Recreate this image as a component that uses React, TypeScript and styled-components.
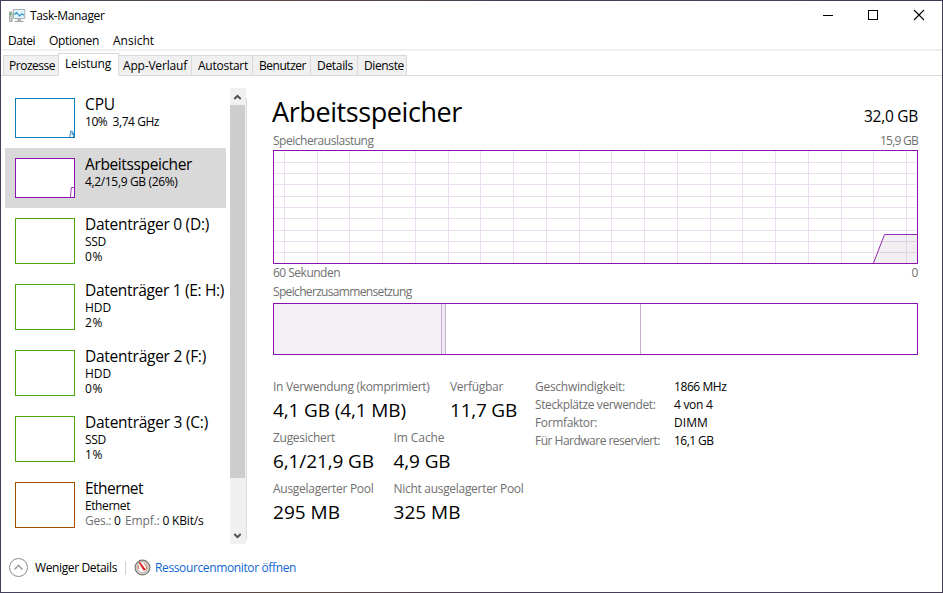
import React, { useLayoutEffect, useRef } from 'react';
import styled, { createGlobalStyle } from 'styled-components';

const GlobalStyle = createGlobalStyle`
  * { box-sizing: border-box; }
  html, body { margin: 0; padding: 0; overflow: hidden; }
  body { font-family: "Open Sans", "Noto Sans", sans-serif; font-size: 12px; line-height: 15px; color: #000; }
`;

const Label = styled.span<{ $width: number; $muted?: boolean }>`
  display: block;
  flex: none;
  width: ${p => p.$width}px;
  white-space: pre;
  color: ${p => (p.$muted ? '#707070' : 'inherit')};
`;

/* Tracks its letters so that the text fills the given width. */
function Fit({ w, muted, children }: { w: number; muted?: boolean; children: string }) {
  const ref = useRef<HTMLSpanElement>(null);
  useLayoutEffect(() => {
    const el = ref.current;
    if (!el) return;
    el.style.letterSpacing = '0px';
    const range = document.createRange();
    range.selectNodeContents(el);
    const natural = range.getBoundingClientRect().width;
    el.style.letterSpacing = `${(w - natural) / children.length}px`;
  }, [w, children]);
  return <Label ref={ref} $width={w} $muted={muted}>{children}</Label>;
}

const Desktop = styled.div`
  width: 943px;
  height: 593px;
  padding: 1px;
  background: linear-gradient(90deg, #44405c, #5d4943 30%, #453b55 55%, #46405e 80%, #403850);
`;

const Window = styled.div`
  display: flex;
  flex-direction: column;
  width: 941px;
  height: 591px;
  background: #fff;
`;

const TitleBar = styled.header`
  display: flex;
  height: 29px;
  padding: 7px 0 0 8px;
`;

const TitleText = styled.div`
  margin-left: 4px;
  flex: 1;
`;

const Controls = styled.div`
  display: flex;
  gap: 30px;
  padding-right: 15px;
`;

const MenuBar = styled.nav`
  display: flex;
  gap: 14px;
  height: 21px;
  padding: 3px 0 0 7px;
  border-bottom: 2px solid #f0f0f0;
`;

const TabBar = styled.div`
  display: flex;
  align-items: flex-end;
  height: 25px;
  padding-left: 2px;
  box-shadow: inset 0 -1px #d9d9d9;
`;

const Tab = styled.div<{ $w: number; $pad: number; $active?: boolean; $first?: boolean }>`
  width: ${p => p.$w}px;
  height: ${p => (p.$active ? 23 : 21)}px;
  padding: 2px 0 0 ${p => p.$pad}px;
  background: ${p => (p.$active ? '#fff' : '#f0f0f0')};
  border: 1px solid #d9d9d9;
  border-left-width: ${p => (p.$active || p.$first ? 1 : 0)}px;
  border-right-width: ${p => (p.$first ? 0 : 1)}px;
  border-bottom-color: ${p => (p.$active ? '#fff' : '#d9d9d9')};
`;

const Body = styled.div`
  display: flex;
  height: 468px;
  padding-top: 12px;
`;

const Sidebar = styled.div`
  width: 225px;
  padding: 0 0 0 4px;
`;

const Item = styled.div<{ $tall?: boolean; $selected?: boolean }>`
  display: flex;
  gap: 10px;
  width: 221px;
  height: ${p => (p.$tall ? 66 : 60)}px;
  padding: 10px 0 0 10px;
  background: ${p => (p.$selected ? '#d9d9d9' : 'transparent')};
`;

const Thumb = styled.div<{ $color: string; $tall?: boolean }>`
  flex: none;
  width: 60px;
  height: ${p => (p.$tall ? 46 : 40)}px;
  background: #fff;
  border: 1px solid ${p => p.$color};
  display: flex;
  align-items: flex-end;
  justify-content: flex-end;
`;

const ItemText = styled.div`
  margin-top: -4px;
`;

const ItemTitle = styled.div`
  font-size: 15.5px;
  line-height: 20px;
`;

const Line = styled.div`
  display: flex;
`;

const Scrollbar = styled.div`
  display: flex;
  flex-direction: column;
  align-items: center;
  justify-content: space-between;
  width: 16px;
  height: 456px;
  margin-left: 4px;
  background: #f0f0f0;
`;

const ScrollHandle = styled.div`
  width: 15px;
  height: 373px;
  margin-right: 1px;
  margin-bottom: 49px;
  background: #cdcdcd;
`;

const ScrollArrow = styled.svg`
  flex: none;
  width: 16px;
  height: 17px;
`;

const Splitter = styled.div`
  width: 1px;
  height: 442px;
  margin-top: 10px;
  background: #dcdcdc;
`;

const Main = styled.main`
  width: 646px;
  margin-left: 25px;
  padding: 5px 0 0 1px;
`;

const Heading = styled.div`
  display: flex;
  justify-content: space-between;
  height: 40px;
  margin-left: -1px;
`;

const HeadingTitle = styled.div`
  font-size: 27px;
  line-height: 37px;
`;

const HeadingTotal = styled.div`
  padding-top: 12px;
  font-size: 15.5px;
  line-height: 22px;
`;

const Caption = styled.div`
  display: flex;
  justify-content: space-between;
  height: 17px;
  width: 645px;
`;

const ChartSvg = styled.svg`
  display: block;
  width: 645px;
  height: 114px;
`;

const AxisLabels = styled(Caption)`
  height: 20px;
  padding-top: 1px;
`;

const CompositionCaption = styled(Caption)`
  height: 19px;
`;

const Composition = styled.div`
  display: flex;
  width: 645px;
  height: 52px;
  border: 1px solid #8b12ae;
`;

const Segment = styled.div<{ $w: number; $fill?: string }>`
  flex: none;
  width: ${p => p.$w}px;
  background: ${p => p.$fill ?? '#fff'};
  border-right: 1px solid #ccacd4;
`;

const Stats = styled.div`
  display: flex;
  padding-top: 24px;
`;

const StatRows = styled.div`
  width: 262px;
`;

const StatRow = styled.div`
  display: flex;
  height: 51px;
`;

const Stat = styled.div<{ $w: number }>`
  flex: none;
  width: ${p => p.$w}px;
`;

const StatValue = styled.div`
  margin-top: 3px;
  font-size: 19px;
  line-height: 26px;
`;

const Details = styled.div`
  display: grid;
  grid-template-columns: 139px auto;
  grid-auto-rows: 18px;
  align-content: start;
`;

const Footer = styled.footer`
  display: flex;
  align-items: center;
  height: 47px;
  padding: 0 0 0 7px;
`;

const FooterText = styled.div`
  margin: 0 0 0 6px;
`;

const FooterRule = styled.div`
  width: 1px;
  height: 14px;
  margin: 0 8px 0 8px;
  background: #d0d0d0;
`;

const LinkText = styled.div`
  margin: 0 0 0 4px;
  color: #0f68d2;
`;

const tabs: [string, number, number, number][] = [
  ['Prozesse', 55, 46, 5],
  ['Leistung', 61, 46, 6],
  ['App-Verlauf', 73, 64, 4],
  ['Autostart', 61, 50, 6],
  ['Benutzer', 58, 47, 6],
  ['Details', 47, 36, 6],
  ['Dienste', 49, 40, 6],
];

const disks: [string, number, string, number, string][] = [
  ['Datenträger 0 (D:)', 124, 'SSD', 21, '0%'],
  ['Datenträger 1 (E: H:)', 139, 'HDD', 26, '2%'],
  ['Datenträger 2 (F:)', 121, 'HDD', 26, '0%'],
  ['Datenträger 3 (C:)', 123, 'SSD', 21, '1%'],
];

const stats: [string, number, string, number, number][][] = [
  [['In Verwendung (komprimiert)', 156.5, '4,1 GB (4,1 MB)', 133, 177], ['Verfügbar', 53, '11,7 GB', 67, 80]],
  [['Zugesichert', 62, '6,1/21,9 GB', 101, 120.5], ['Im Cache', 51, '4,9 GB', 57, 130]],
  [['Ausgelagerter Pool', 100.5, '295 MB', 67, 120.5], ['Nicht ausgelagerter Pool', 130, '325 MB', 67, 135]],
];

const details: [string, number, string, number][] = [
  ['Geschwindigkeit:', 90, '1866 MHz', 52.5],
  ['Steckplätze verwendet:', 120.5, '4 von 4', 38.5],
  ['Formfaktor:', 62, 'DIMM', 34],
  ['Für Hardware reserviert:', 125, '16,1 GB', 39.5],
];

const gridX = Array.from({ length: 20 }, (_, k) => Math.floor(11.4 + 32.75 * k));
const gridY = [12, 23, 34, 46, 57, 68, 80, 91, 102];

function AppIcon() {
  return (
    <svg width="17" height="16" viewBox="0 0 17 16">
      <path d="M.4 3.9h2.7v9.7H.4z" fill="#c9c9c9" stroke="#9b9b9b" strokeWidth=".8" />
      <path d="M.8 5.2h1.6v1.6H.8z" fill="#35b44a" />
      <path d="M4.5 1.5h11.3v9H4.5z" fill="#dff3fb" stroke="#a9b0b4" />
      <path d="M5.3 6.5l2.2-2 3.2 3.4 2-2.2 2.4 1.5" fill="none" stroke="#2793c8" strokeWidth="1.1" />
      <path d="M8.5 11h3.4v1.5H8.5zM5.8 12.8h8.8V14H5.8z" fill="#a3a7a9" />
    </svg>
  );
}

function GaugeIcon() {
  return (
    <svg width="17" height="17" viewBox="0 0 17 17">
      <circle cx="8.5" cy="8.5" r="7.4" fill="#dedbd6" stroke="#77736e" strokeWidth="1.1" />
      <circle cx="8.5" cy="8.2" r="5.4" fill="#fff" stroke="#a39d96" strokeWidth=".8" />
      <path d="M4.7 10a4.2 4.2 0 0 1 0-3.5M12 10.5a4.2 4.2 0 0 0-2-5.9" fill="none" stroke="#df7951" strokeWidth="1.1" />
      <path d="M5 3.6L5.9 3.2 11.3 10.6 9.9 11.5z" fill="#d51218" stroke="#d51218" strokeWidth=".6" />
    </svg>
  );
}

export default function App() {
  return (
    <>
      <GlobalStyle />
      <Desktop>
        <Window>
          <TitleBar>
            <AppIcon />
            <TitleText><Fit w={74.5}>Task-Manager</Fit></TitleText>
            <Controls>
              <svg width="15" height="15"><path d="M2 7.5h10" stroke="#000" shapeRendering="crispEdges" /></svg>
              <svg width="16" height="15"><path d="M2.5 2.5h9v9h-9z" fill="none" stroke="#000" shapeRendering="crispEdges" /></svg>
              <svg width="15" height="15"><path d="M2 2l10 10M12 2L2 12" stroke="#000" strokeWidth="1.1" /></svg>
            </Controls>
          </TitleBar>
          <MenuBar>
            <Fit w={27}>Datei</Fit>
            <Fit w={50}>Optionen</Fit>
            <Fit w={41}>Ansicht</Fit>
          </MenuBar>
          <TabBar>
            {tabs.map(([name, w, tw, pad], i) => (
              <Tab key={name} $w={w} $pad={pad} $active={i === 1} $first={i === 0}><Fit w={tw}>{name}</Fit></Tab>
            ))}
          </TabBar>
          <Body>
            <Sidebar>
              <Item>
                <Thumb $color="#117dbb">
                  <svg width="5" height="7"><path d="M.8 7L1.8 1h1.4v4L4.6 2.5V7" fill="none" stroke="#3a92c6" /></svg>
                </Thumb>
                <ItemText>
                  <ItemTitle><Fit w={30}>CPU</Fit></ItemTitle>
                  <Fit w={74}>10%  3,74 GHz</Fit>
                </ItemText>
              </Item>
              <Item $selected>
                <Thumb $color="#8b12ae">
                  <svg width="4" height="10"><path d="M.5 10L1.3.5H4" fill="none" stroke="#a03cbe" /></svg>
                </Thumb>
                <ItemText>
                  <ItemTitle><Fit w={107}>Arbeitsspeicher</Fit></ItemTitle>
                  <Fit w={92.5}>4,2/15,9 GB (26%)</Fit>
                </ItemText>
              </Item>
              {disks.map(([name, w, kind, kw, load]) => (
                <Item $tall key={name}>
                  <Thumb $tall $color="#4da60c" />
                  <ItemText>
                    <ItemTitle><Fit w={w}>{name}</Fit></ItemTitle>
                    <Fit w={kw}>{kind}</Fit>
                    <Fit w={18}>{load}</Fit>
                  </ItemText>
                </Item>
              ))}
              <Item $tall>
                <Thumb $tall $color="#a74f01" />
                <ItemText>
                  <ItemTitle><Fit w={58}>Ethernet</Fit></ItemTitle>
                  <Fit w={45}>Ethernet</Fit>
                  <Line>
                    <Fit w={29} muted>{'Ges.: '}</Fit>
                    <Fit w={11}>{'0 '}</Fit>
                    <Fit w={37.5} muted>{'Empf.: '}</Fit>
                    <Fit w={41}>0 KBit/s</Fit>
                  </Line>
                </ItemText>
              </Item>
            </Sidebar>
            <Scrollbar>
              <ScrollArrow><path d="M4.3 11L7.5 7.8 10.7 11" fill="none" stroke="#505050" strokeWidth="2" /></ScrollArrow>
              <ScrollHandle />
              <ScrollArrow><path d="M4.3 7L7.5 10.2 10.7 7" fill="none" stroke="#505050" strokeWidth="2" /></ScrollArrow>
            </Scrollbar>
            <Splitter />
            <Main>
              <Heading>
                <HeadingTitle><Fit w={190}>Arbeitsspeicher</Fit></HeadingTitle>
                <HeadingTotal><Fit w={54}>32,0 GB</Fit></HeadingTotal>
              </Heading>
              <Caption>
                <Fit w={100.5} muted>Speicherauslastung</Fit>
                <Fit w={38} muted>15,9 GB</Fit>
              </Caption>
              <ChartSvg viewBox="0 0 645 114">
                <g fill="#ecdef0">
                  {gridX.map(x => <rect key={x} x={x} y="1" width="1" height="112" />)}
                  {gridY.map(y => <rect key={y} x="1" y={y} width="642" height="1" />)}
                </g>
                <path d="M600.5 113L611.5 84.5H644V113z" fill="#4a205c" fillOpacity=".07" />
                <path d="M600.5 113L611.5 84.5H644" fill="none" stroke="#952ab4" />
                <rect x=".5" y=".5" width="644" height="113" fill="none" stroke="#8b12ae" />
              </ChartSvg>
              <AxisLabels>
                <Fit w={67} muted>60 Sekunden</Fit>
                <Fit w={6.5} muted>0</Fit>
              </AxisLabels>
              <CompositionCaption>
                <Fit w={138.5} muted>Speicherzusammensetzung</Fit>
              </CompositionCaption>
              <Composition>
                <Segment $w={168} $fill="#f3f1f5" />
                <Segment $w={4} $fill="#f0e9f3" />
                <Segment $w={195} />
              </Composition>
              <Stats>
                <StatRows>
                  {stats.map((row, i) => (
                    <StatRow key={i}>
                      {row.map(([name, w, value, vw, cw]) => (
                        <Stat key={name} $w={cw}>
                          <Fit w={w} muted>{name}</Fit>
                          <StatValue><Fit w={vw}>{value}</Fit></StatValue>
                        </Stat>
                      ))}
                    </StatRow>
                  ))}
                </StatRows>
                <Details>
                  {details.map(([name, w, value, vw]) => (
                    <React.Fragment key={name}>
                      <Fit w={w} muted>{name}</Fit>
                      <Fit w={vw}>{value}</Fit>
                    </React.Fragment>
                  ))}
                </Details>
              </Stats>
            </Main>
          </Body>
          <Footer>
            <svg width="21" height="21" viewBox="0 0 21 21">
              <circle cx="10.5" cy="10.5" r="9" fill="#fff" stroke="#8a8a8a" />
              <path d="M6.5 12.5l4-4 4 4" fill="none" stroke="#a0a0a0" strokeWidth="1.6" />
            </svg>
            <FooterText><Fit w={82}>Weniger Details</Fit></FooterText>
            <FooterRule />
            <GaugeIcon />
            <LinkText><Fit w={141}>Ressourcenmonitor öffnen</Fit></LinkText>
          </Footer>
        </Window>
      </Desktop>
    </>
  );
}
